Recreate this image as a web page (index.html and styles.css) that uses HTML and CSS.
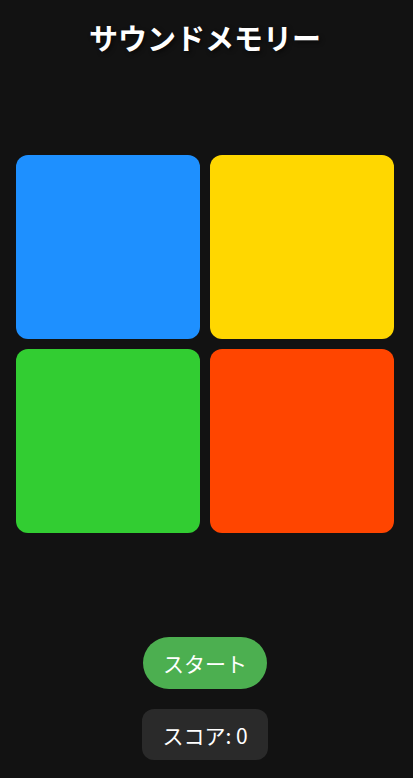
FILE: index.html
```html
<!DOCTYPE html>
<html lang="ja">
<head>
  <meta charset="UTF-8">
  <title>サウンドメモリー</title>
  <link rel="stylesheet" href="styles.css">
</head>
<body>
  <div class="app">
    <h1 class="title">サウンドメモリー</h1>

    <div class="board">
      <div class="pad pad-blue" data-pad="0"></div>
      <div class="pad pad-yellow" data-pad="1"></div>
      <div class="pad pad-green" data-pad="2"></div>
      <div class="pad pad-red" data-pad="3"></div>
    </div>

    <div class="controls">
      <button class="start-btn" id="startBtn">スタート</button>
      <div class="score" id="score">スコア: 0</div>
    </div>
  </div>
</body>
</html>
```

FILE: styles.css
```css
html, body { margin:0; padding:0; height:100%; }
body {
  background:#121212;
  color:#fff;
  font-family:"Noto Sans CJK JP", "Noto Sans", sans-serif;
}
.app {
  display:flex; flex-direction:column; align-items:center;
  height:100%; box-sizing:border-box;
  padding:18px 19px 18px 16px;
}
.title {
  margin:0;
  font-size:29px; line-height:38px; font-weight:bold;
  text-shadow:2px 2px 4px rgba(0,0,0,0.5);
}
.board {
  display:grid;
  grid-template-columns:184px 184px;
  grid-auto-rows:184px;
  gap:10px;
  margin-top:99px;
}
.pad { border-radius:12px; cursor:pointer; }
.pad-blue   { background:#1e90ff; }
.pad-yellow { background:#ffd700; }
.pad-green  { background:#32cd32; }
.pad-red    { background:#ff4500; }

.controls {
  margin-top:auto;
  display:flex; flex-direction:column; align-items:center;
  gap:20px;
}
.start-btn {
  background:#4caf50; color:#fff;
  border:none; border-radius:26px;
  width:124px; height:52px;
  font-family:inherit; font-size:21px;
  cursor:pointer;
}
.score {
  background:#2a2a2a;
  border-radius:12px;
  width:126px; height:51px;
  display:flex; align-items:center; justify-content:center;
  font-size:21px;
}
```
